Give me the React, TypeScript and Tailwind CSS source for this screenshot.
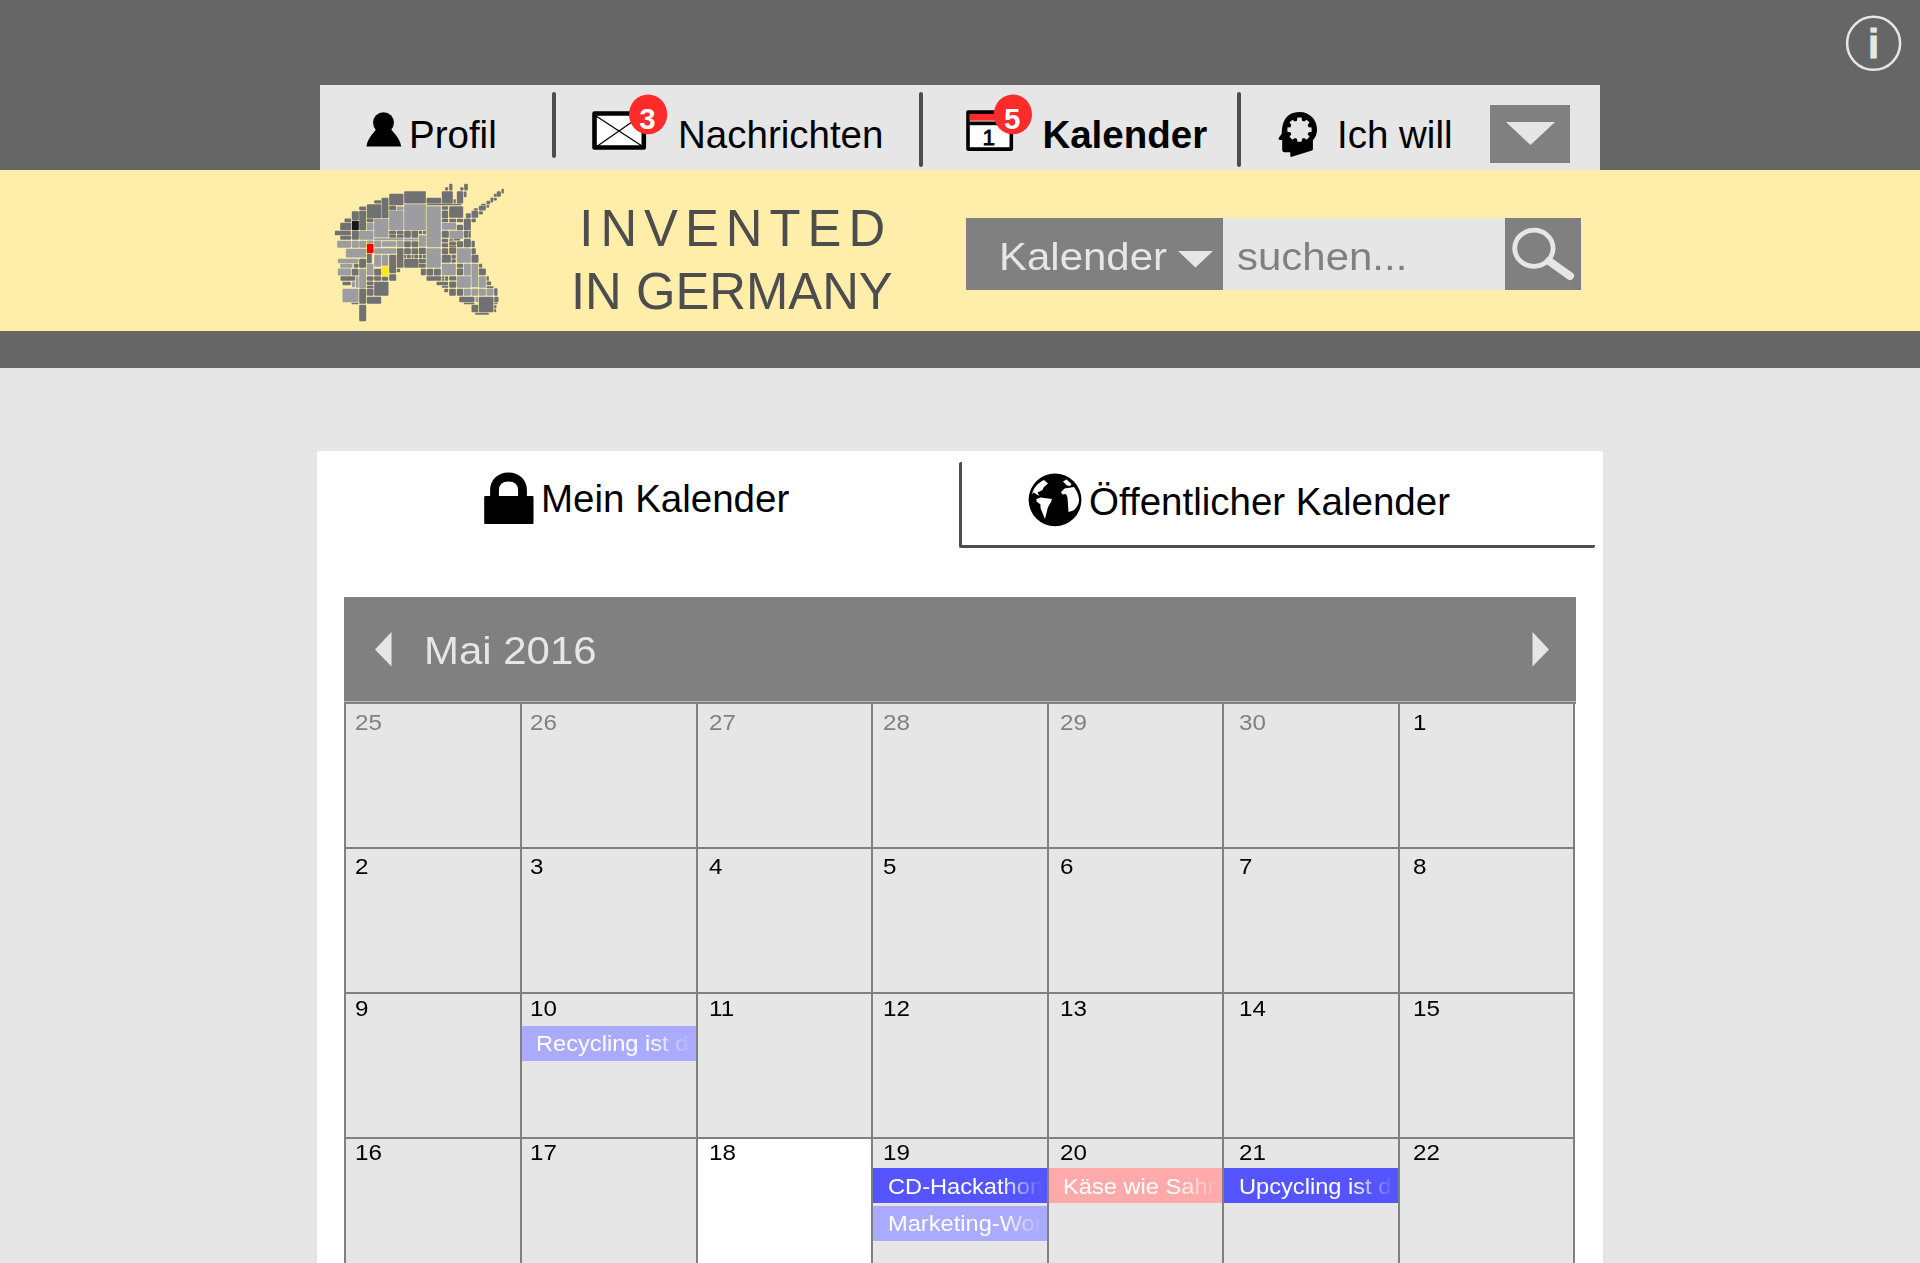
import React from "react";

type Shade = "d" | "l" | "k" | "r" | "y";
type Tile = [number, number, number, number, Shade];

const shades: Record<Shade, string> = {
  d: "#707173",
  l: "#9b9da0",
  k: "#1a171b",
  r: "#ff0000",
  y: "#fcea1b",
};

const tiles: Tile[] = [
  // ears and horn
  [388, 27, 9, 19, "d"], [376, 37, 8, 9, "d"], [366, 49, 32, 36, "d"], [401, 73, 6, 11, "d"],
  [433, 27, 10, 19, "d"], [421, 37, 9, 9, "d"], [411, 49, 18, 36, "d"], [432, 50, 7, 16, "d"],
  [545, 42, 6, 13, "d"], [531, 49, 11, 16, "d"], [522, 57, 8, 8, "d"], [521, 69, 9, 7, "d"], [512, 68, 7, 14, "d"],
  [500, 78, 10, 9, "d"], [500, 90, 7, 8, "d"], [477, 93, 20, 13, "d"], [484, 87, 13, 4, "d"], [462, 100, 11, 6, "d"],
  [455, 108, 19, 20, "d"], [477, 109, 11, 9, "d"], [438, 115, 14, 14, "d"], [455, 131, 12, 10, "d"],
  // crown
  [163, 76, 20, 9, "d"], [185, 69, 20, 60, "d"], [208, 57, 42, 33, "d"], [253, 49, 64, 36, "d"], [320, 69, 43, 16, "d"],
  [118, 95, 20, 10, "d"], [141, 88, 42, 41, "d"], [208, 93, 20, 12, "d"], [231, 95, 19, 10, "l"],
  [320, 87, 104, 3, "d"], [366, 94, 18, 10, "d"], [388, 94, 41, 34, "d"], [366, 107, 18, 22, "d"],
  [96, 109, 20, 26, "d"], [118, 108, 20, 57, "d"], [74, 131, 19, 10, "d"], [61, 144, 32, 21, "d"], [96, 138, 20, 27, "k"],
  [141, 131, 19, 10, "d"], [141, 144, 19, 21, "l"], [163, 132, 42, 55, "l"], [208, 107, 42, 58, "l"],
  [253, 88, 64, 77, "l"], [320, 94, 42, 122, "l"],
  [366, 132, 18, 9, "d"], [388, 132, 20, 9, "d"], [411, 132, 18, 9, "d"], [432, 132, 20, 33, "d"],
  [366, 144, 42, 20, "l"], [411, 150, 18, 15, "d"],
  // mane and forehead
  [45, 168, 47, 12, "d"], [61, 183, 32, 11, "d"], [96, 168, 20, 26, "d"], [118, 168, 42, 26, "l"],
  [208, 168, 20, 10, "d"], [231, 168, 19, 10, "d"], [208, 180, 20, 8, "d"], [231, 180, 19, 8, "d"],
  [253, 168, 19, 20, "d"], [275, 168, 19, 20, "d"], [297, 168, 9, 9, "d"], [309, 168, 8, 9, "d"], [297, 181, 20, 34, "l"],
  [366, 168, 20, 20, "d"], [389, 168, 40, 23, "l"], [432, 168, 12, 20, "d"], [446, 168, 6, 20, "d"],
  [163, 190, 87, 5, "l"], [253, 191, 41, 5, "l"],
  [52, 198, 41, 20, "l"], [96, 198, 20, 20, "l"], [118, 198, 20, 20, "l"], [141, 207, 19, 27, "r"], [141, 197, 19, 8, "l"],
  [163, 198, 20, 18, "l"], [186, 199, 42, 16, "l"], [231, 198, 19, 18, "l"], [253, 199, 19, 17, "d"], [275, 199, 19, 17, "d"],
  [366, 192, 18, 10, "d"], [366, 205, 18, 11, "d"], [388, 193, 12, 4, "d"], [402, 192, 18, 4, "d"], [388, 200, 20, 11, "d"],
  [411, 199, 18, 17, "d"], [432, 192, 20, 24, "d"], [455, 198, 9, 18, "d"], [388, 213, 20, 4, "d"],
  [78, 222, 60, 25, "l"], [163, 220, 65, 16, "l"], [231, 220, 19, 58, "d"], [253, 220, 19, 17, "d"], [275, 220, 19, 17, "d"],
  [297, 219, 20, 18, "d"], [320, 220, 42, 58, "l"], [366, 220, 18, 17, "d"], [388, 219, 20, 17, "d"], [411, 220, 41, 43, "l"], [455, 220, 12, 17, "d"],
  [253, 240, 5, 9, "d"], [261, 240, 11, 9, "d"], [275, 240, 5, 9, "d"], [283, 240, 11, 9, "d"], [297, 240, 9, 9, "d"], [309, 240, 8, 9, "d"],
  [141, 237, 14, 27, "d"], [163, 240, 20, 35, "l"], [186, 240, 18, 32, "l"], [208, 240, 20, 54, "d"],
  [366, 240, 26, 23, "d"], [395, 240, 12, 11, "d"], [395, 253, 12, 10, "d"], [455, 240, 20, 23, "d"],
  // neck, left
  [54, 252, 61, 12, "l"], [118, 252, 20, 26, "d"], [61, 267, 36, 11, "l"], [102, 267, 13, 11, "d"], [141, 267, 19, 33, "l"],
  [54, 281, 39, 20, "l"], [96, 282, 19, 19, "d"], [118, 282, 20, 57, "l"], [163, 282, 20, 19, "d"], [185, 275, 20, 28, "y"],
  [231, 282, 9, 9, "d"], [208, 298, 20, 19, "d"], [62, 304, 43, 13, "d"], [108, 304, 7, 34, "l"], [141, 304, 19, 13, "d"],
  [163, 304, 20, 13, "d"], [186, 306, 18, 11, "d"], [68, 321, 24, 9, "d"], [96, 320, 9, 16, "l"],
  [141, 320, 19, 10, "d"], [141, 333, 19, 6, "d"], [163, 321, 42, 41, "d"],
  [68, 342, 47, 39, "l"], [118, 342, 20, 44, "d"], [141, 342, 19, 20, "d"], [141, 366, 42, 20, "d"], [95, 384, 20, 3, "d"],
  [118, 390, 20, 48, "d"],
  // jaw and muzzle
  [253, 252, 42, 26, "d"], [297, 252, 20, 12, "d"], [297, 267, 20, 11, "d"], [303, 282, 14, 18, "d"],
  [320, 282, 19, 19, "d"], [342, 282, 20, 19, "d"], [320, 304, 43, 13, "d"], [366, 267, 41, 33, "l"], [411, 267, 18, 11, "d"],
  [432, 267, 20, 34, "l"], [455, 267, 19, 69, "l"], [477, 267, 9, 11, "d"], [411, 281, 18, 19, "d"], [477, 281, 20, 19, "d"],
  [366, 304, 7, 6, "d"], [376, 304, 8, 13, "d"], [366, 312, 7, 5, "d"], [388, 304, 20, 12, "d"], [411, 304, 41, 34, "l"],
  [477, 304, 20, 34, "l"], [500, 304, 6, 13, "d"], [350, 321, 34, 9, "d"], [388, 320, 20, 18, "d"], [366, 333, 18, 5, "d"],
  [500, 320, 13, 10, "d"], [500, 334, 20, 5, "d"], [373, 342, 11, 9, "d"], [388, 342, 19, 20, "d"], [411, 342, 18, 20, "d"],
  [432, 342, 20, 20, "l"], [455, 342, 19, 20, "l"], [477, 342, 20, 20, "l"], [500, 342, 20, 20, "l"], [523, 340, 9, 22, "d"],
  [418, 366, 45, 15, "d"], [467, 366, 7, 15, "l"], [477, 366, 43, 45, "d"], [523, 366, 12, 15, "d"],
  [432, 384, 31, 3, "d"], [455, 390, 19, 21, "d"], [523, 391, 6, 9, "d"], [523, 384, 9, 3, "d"], [523, 403, 5, 8, "d"], [466, 414, 40, 5, "d"],
];

function UnicornLogo() {
  return (
    <svg className="mt-[5px] ml-[320px] block h-[155px] w-[200px] shrink-0" viewBox="0 0 600 465">
      {tiles.map(([x, y, w, h, c], i) => (
        <rect key={i} x={x - 0.5} y={y - 0.5} width={w + 1} height={h + 1} rx={Math.min(3, w / 3, h / 3)} fill={shades[c]} />
      ))}
    </svg>
  );
}

function PersonIcon() {
  return (
    <svg className="mt-[27px] ml-[46px] block h-[35px] w-[36px] shrink-0" viewBox="366 112 36 35">
      <circle cx="383.5" cy="122.7" r="10.4" />
      <path d="M376 128.500C376.500 131 367.500 137 366.500 146.400H401.200C400 137 391 131 391 128.500Z" />
    </svg>
  );
}

function Badge({ cx, count }: { cx: number; count: string }) {
  return (
    <>
      <ellipse cx={cx} cy="114.4" rx="19.100" ry="19.900" fill="#ff2a2a" />
      <text x={cx - 0.6} y="128.500" textAnchor="middle" fontSize="29.500" fontWeight="700" fill="#fff">
        {count}
      </text>
    </>
  );
}

function MailIcon() {
  return (
    <svg className="mt-[7px] ml-[34px] block h-[62px] w-[80px] shrink-0" viewBox="590 92 80 62">
      <rect x="594.5" y="113.500" width="49.300" height="34" fill="#fff" stroke="#000" strokeWidth="4.6" strokeLinejoin="round" />
      <path d="M596 116 L642 146 M596 147 L642 115" stroke="#000" strokeWidth="1.3" />
      <Badge cx={648.100} count="3" />
    </svg>
  );
}

function CalendarIcon() {
  return (
    <svg className="mt-[7px] ml-[41px] block h-[62px] w-[70px] shrink-0" viewBox="964 92 70 62">
      <rect x="968" y="112.100" width="43.300" height="37" fill="#fff" stroke="#000" strokeWidth="3.6" strokeLinejoin="round" />
      <rect x="969.800" y="113.900" width="39.700" height="6.800" fill="#ff2a2a" />
      <rect x="968" y="121.500" width="43" height="3.700" />
      <text x="988.800" y="145" textAnchor="middle" fontSize="22.500" stroke="#000" strokeWidth="0.8">
        1
      </text>
      <Badge cx={1012.900} count="5" />
    </svg>
  );
}

const gearPoints = Array.from({ length: 8 }, (_, i) => {
  const offsets: [number, number][] = [[-0.27, 9.4], [-0.17, 12.3], [0.17, 12.3], [0.27, 9.4]];
  return offsets
    .map(([o, r]) => {
      const a = (i * Math.PI) / 4 + o;
      return `${(1299.5 + r * Math.sin(a)).toFixed(2)},${(129.7 - r * Math.cos(a)).toFixed(2)}`;
    })
    .join(" ");
}).join(" ");

function HeadIcon() {
  return (
    <svg className="mt-[25px] ml-[34.4px] block h-[49px] w-[44px] shrink-0" viewBox="1276 110 44 49">
      <path d="M1299.500 112C1309.500 112 1317 119.500 1317 129.500C1317 134 1315.500 137.500 1312.900 140.300V149.500L1312 150.500L1291 157L1290.300 156.300V152.200H1284.500Q1282.200 152.200 1282.200 149.500V140H1280Q1278 139.800 1278.900 137.800L1281.800 133.500C1281.800 130 1282.200 126 1283.500 122.500C1286 116 1291.500 112 1299.500 112Z" />
      <polygon points={gearPoints} fill="#e6e6e6" />
    </svg>
  );
}

function NavDivider({ className }: { className: string }) {
  return <div className={`mt-[6.500px] w-[4px] shrink-0 rounded-full bg-[#4d4d4d] ${className}`} />;
}

const navText = "mt-[31px] block shrink-0 text-[38.5px] leading-none whitespace-nowrap";

function TopNav() {
  return (
    <div className="flex h-[170px] items-start bg-[#666666] pl-[320px]">
      <nav className="mt-[85px] flex h-[85px] w-[1280px] shrink-0 items-start bg-[#e6e6e6]">
        <PersonIcon />
        <span className={`${navText} ml-[7px] w-[89px]`}>Profil</span>
        <NavDivider className="ml-[54px] h-[66px]" />
        <MailIcon />
        <span className={`${navText} ml-[8px] w-[205px]`}>Nachrichten</span>
        <NavDivider className="ml-[35.500px] h-[75px]" />
        <CalendarIcon />
        <span className={`${navText} ml-[8.9px] w-[166px] font-bold`}>Kalender</span>
        <NavDivider className="ml-[29px] h-[75px]" />
        <HeadIcon />
        <span className={`${navText} ml-[17.200px] w-[117px]`}>Ich will</span>
        <button className="mt-[19.500px] ml-[36px] flex h-[58.500px] w-[80.5px] shrink-0 justify-center bg-[#808080] pt-[17.500px]">
          <svg className="block h-[23px] w-[49px]" viewBox="0 0 49 23">
            <path d="M0 0H49L24.500 23Z" fill="#e6e6e6" />
          </svg>
        </button>
      </nav>
      <svg className="mt-[14px] ml-[244px] block h-[58px] w-[58px] shrink-0" viewBox="1844 14 58 58">
        <circle cx="1873.600" cy="43.300" r="26.500" fill="none" stroke="#e6e6e6" strokeWidth="2.5" />
        <text x="1873.600" y="58" textAnchor="middle" fontSize="40" fontWeight="700" fill="#e6e6e6" stroke="#e6e6e6" strokeWidth="0.8">
          i
        </text>
      </svg>
    </div>
  );
}

function Banner() {
  return (
    <div className="flex h-[161px] items-start bg-[#ffeeaa]">
      <UnicornLogo />
      <div className="ml-[52px] w-[330px] shrink-0 text-[50.8px] leading-none whitespace-nowrap text-[#4d4d4d]">
        <div className="mt-[34px] ml-[7.3px] h-[50.8px] origin-[0_43px] scale-y-[1.03] tracking-[7px]">INVENTED</div>
        <div className="mt-[12.6px] -ml-[1px] h-[50.8px] origin-[0_43px] scale-y-[1.03] [font-kerning:none]">IN GERMANY</div>
      </div>
      <div className="mt-[47.500px] ml-[64px] flex h-[72.500px] shrink-0 items-start text-[38.5px] leading-none">
        <div className="flex h-full w-[257px] items-start bg-[#808080] pl-[32.500px]">
          <span className="mt-[20.800px] block w-[179.500px] origin-left scale-x-[1.09] text-[#e6e6e6]">Kalender</span>
          <svg className="mt-[33.500px] block h-[17px] w-[35px] shrink-0" viewBox="0 0 35 17">
            <path d="M0 0H35L17.500 16.500Z" fill="#e6e6e6" />
          </svg>
        </div>
        <div className="h-full w-[281.500px] bg-[#e6e6e6] pl-[14px]">
          <span className="mt-[20.800px] block w-[180px] origin-left scale-x-[1.09] text-[#808080]">suchen...</span>
        </div>
        <button className="h-full w-[76.500px] bg-[#808080]">
          <svg className="block h-full w-full" viewBox="1504.500 217.500 76.500 72.500" fill="none" stroke="#e6e6e6">
            <ellipse cx="1533.400" cy="247.800" rx="19.200" ry="18.100" strokeWidth="4.800" />
            <path d="M1548.500 260.500L1569.500 275.500" strokeWidth="8" strokeLinecap="round" />
          </svg>
        </button>
      </div>
    </div>
  );
}

function LockIcon() {
  return (
    <svg className="mt-[21px] ml-[167px] block h-[53px] w-[50px] shrink-0" viewBox="484 472 50 53">
      <rect x="484.200" y="496" width="49.300" height="28" rx="1" />
      <path d="M494.500 497V490.500C494.500 482 500.500 477 508.500 477C516.500 477 522.500 482 522.500 490.500V497" fill="none" stroke="#000" strokeWidth="8.800" />
    </svg>
  );
}

function GlobeIcon() {
  return (
    <svg className="mt-[11px] ml-[66px] block h-[54px] w-[54px] shrink-0" viewBox="1027.500 472 54 54">
      <circle cx="1054.500" cy="498.800" r="26.400" />
      <g fill="#fff">
        <path d="M1043.500 479L1047.500 482.500L1043 486.500L1042 489L1037 491.500L1039 495L1033 491.500L1031.500 493.500C1032.500 487.500 1037 482 1043.500 479Z" />
        <path d="M1036 498L1040 496.500L1051.500 498L1050.500 501L1047.500 506L1044.500 518L1040 507V503.500L1036 500.500Z" />
        <path d="M1062.500 480.500L1066 478.500L1071 483L1069.500 485L1066.500 484.500L1065 483Z" />
        <path d="M1060.500 491L1064 487.500L1073.500 486C1076.500 490 1078.800 495 1078.500 500C1078 504 1075.500 507.500 1073 509.500L1068 511L1067 496.500L1065.500 493L1062 493.500Z" />
      </g>
    </svg>
  );
}

function Tabs() {
  return (
    <div className="flex h-[98px] items-start text-[38.5px] leading-none whitespace-nowrap">
      <div className="flex w-[641.500px] shrink-0 items-start">
        <LockIcon />
        <span className="mt-[29.400px] ml-[7px] block">Mein Kalender</span>
      </div>
      <div className="mt-[10.500px] flex h-[86px] w-[636.500px] shrink-0 items-start rounded-[2px] border-b-[3px] border-l-[3px] border-[#4d4d4d]">
        <GlobeIcon />
        <span className="mt-[21.500px] ml-[7.500px] block">Öffentlicher Kalender</span>
      </div>
    </div>
  );
}

interface CalendarEvent {
  title: string;
  color: string;
}

const blue = "bg-[#5555ff]";
const paleBlue = "bg-[#aaaaff]";
const pink = "bg-[#ffaaaa]";

const events: Record<string, CalendarEvent[]> = {
  "10": [{ title: "Recycling ist d", color: paleBlue }],
  "19": [
    { title: "CD-Hackathon", color: blue },
    { title: "Marketing-Wor", color: paleBlue },
  ],
  "20": [{ title: "Käse wie Sahn", color: pink }],
  "21": [{ title: "Upcycling ist d", color: blue }],
};

const weeks = [
  { pad: "pt-[8.400px]", gap: "mt-[6px]", text: "pt-[6.800px]", days: ["25", "26", "27", "28", "29", "30", "1"] },
  { pad: "pt-[7.400px]", gap: "mt-[6px]", text: "pt-[6.800px]", days: ["2", "3", "4", "5", "6", "7", "8"] },
  { pad: "pt-[4px]", gap: "mt-[6px]", text: "pt-[5.800px]", days: ["9", "10", "11", "12", "13", "14", "15"] },
  { pad: "pt-[3.400px]", gap: "mt-[4px]", text: "pt-[6.400px]", days: ["16", "17", "18", "19", "20", "21", "22"] },
];

const indents = ["pl-[9px]", "pl-[8px]", "pl-[11.500px]", "pl-[10px]", "pl-[11.500px]", "pl-[14.500px]", "pl-[13.500px]"];

function EventBar({ event, textPad }: { event: CalendarEvent; textPad: string }) {
  return (
    <div className={`mb-[2.500px] h-[35px] ${event.color}`}>
      <div
        className={`h-full w-[168px] overflow-hidden pl-[14.500px] [mask-image:linear-gradient(to_right,black_128px,transparent_170px)] ${textPad}`}
      >
        <span className="block w-max origin-left scale-x-[1.09] text-[21.7px] leading-[24px] whitespace-nowrap text-white">
          {event.title}
        </span>
      </div>
    </div>
  );
}

function Calendar() {
  return (
    <section className="ml-[27.400px] w-[1231.5px]">
      <header className="flex h-[104px] items-start bg-[#808080] text-[38.5px] leading-none text-[#e6e6e6]">
        <svg className="mt-[35px] ml-[30.500px] block h-[35px] w-[17px] shrink-0" viewBox="0 0 17 35">
          <path d="M16.500 0V34.500L0 17.500Z" fill="#e6e6e6" />
        </svg>
        <h1 className="mt-[35px] ml-[31.800px] block w-[200px] origin-left scale-x-[1.09] whitespace-nowrap">
          Mai 2016
        </h1>
        <svg className="mt-[35px] mr-[26.500px] ml-auto block h-[35px] w-[17px] shrink-0" viewBox="0 0 17 35">
          <path d="M0.500 0V34.500L17 17.500Z" fill="#e6e6e6" />
        </svg>
      </header>
      <div className="h-px bg-[#b5b5b5]" />
      <div className="border-t-2 border-l-2 border-[#808080]">
        {weeks.map((week) => (
          <div key={week.days[0]} className="grid h-[145px] w-[1229px] grid-cols-7">
            {week.days.map((day, col) => (
              <div
                key={day}
                className={`min-w-0 overflow-hidden border-r-2 border-b-2 border-[#808080] ${week.pad} ${day === "18" ? "bg-white" : "bg-[#e6e6e6]"}`}
              >
                <div
                  className={`text-[22px] leading-none ${indents[col]} ${week.days[0] === "25" && day !== "1" ? "text-[#808080]" : "text-black"}`}
                >
                  <span className="block w-max origin-left scale-x-[1.1]">{day}</span>
                </div>
                <div className={week.gap}>
                  {(events[day] ?? []).map((e) => (
                    <EventBar key={e.title} event={e} textPad={week.text} />
                  ))}
                </div>
              </div>
            ))}
          </div>
        ))}
      </div>
    </section>
  );
}

export default function App() {
  return (
    <div className="h-[1263px] w-[1920px] overflow-hidden bg-[#e6e6e6] font-['Liberation_Sans',Arial,sans-serif] text-black">
      <TopNav />
      <Banner />
      <div className="h-[37px] bg-[#666666]" />
      <main className="mt-[83px] ml-[317px] h-[812px] w-[1286px] rounded-t-[3px] bg-white">
        <Tabs />
        <div className="mt-[48px]">
          <Calendar />
        </div>
      </main>
    </div>
  );
}
